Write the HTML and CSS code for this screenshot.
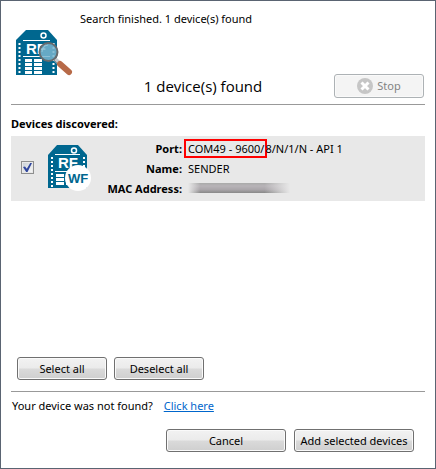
FILE: index.html
```html
<!DOCTYPE html>
<html lang="en">
<head>
<meta charset="utf-8">
<title>Search devices</title>
<link rel="stylesheet" href="styles.css">
</head>
<body>
<main class="dialog">
  <header class="header">
    <svg class="search-icon" viewBox="0 0 58 48" aria-hidden="true">
      <path fill="#00678f" d="M10 0H32L41 10V45H0V10Z"/>
      <circle cx="27.500" cy="5.500" r="2.500" fill="none" stroke="#fff" stroke-width="1.500"/>
      <path stroke="#fff" d="M7 10.500H34M7 26.500H34"/>
      <path stroke="#fff" stroke-width="2" stroke-dasharray="2 2" d="M3.500 13V44M37.500 13V44"/>
      <path stroke="#fff" stroke-width="3" d="M9 30.500H16M18 30.500H26M9 34.500H16M18 34.500H26M9 38.500H16M18 38.500H26M9 42.500H16M18 42.500H26"/>
      <text class="icon-text" x="10" y="24" font-size="15">RF</text>
      <path stroke="#c5c9cc" stroke-width="4" d="M38 28L44 34"/>
      <path stroke="#8a9196" stroke-width="1" d="M38 30L42 34"/>
      <circle cx="32.500" cy="22" r="9" fill="#78b5cf" fill-opacity=".85" stroke="#666a6d" stroke-width="2"/>
      <path fill="none" stroke="#a7d0df" stroke-opacity=".7" d="M26 22A7 7 0 0 1 32 15"/>
      <path stroke="#b76a48" stroke-width="6" stroke-linecap="round" d="M44 34L53 42"/>
    </svg>
    <p class="status">Search finished. 1 device(s) found</p>
    <h1 class="count">1 device(s) found</h1>
    <button class="button stop" type="button" disabled>
      <svg class="stop-icon" viewBox="0 0 16 16" aria-hidden="true">
        <circle cx="8" cy="8" r="8" fill="#c6c6c6"/>
        <path stroke="#fff" stroke-width="3" d="M4.500 4.500L11.500 11.500M11.500 4.500L4.500 11.500"/>
      </svg>
      Stop
    </button>
  </header>

  <section class="devices">
    <h2 class="title">Devices discovered:</h2>
    <div class="device">
      <input class="check" type="checkbox" aria-label="Select SENDER" checked>
      <svg class="device-icon" viewBox="0 0 44 48" aria-hidden="true">
        <path fill="#00678f" d="M9 0H30L39 10V43H0V10Z"/>
        <circle cx="26" cy="5.500" r="2.500" fill="none" stroke="#fff" stroke-width="1.500"/>
        <path stroke="#fff" d="M7 9.500H32M7 26.500H32"/>
        <path stroke="#fff" stroke-width="2" stroke-dasharray="2 2" d="M4 12V42M36 12V30"/>
        <path stroke="#fff" stroke-width="3" d="M8 30.500H16M18 30.500H26M8 34.500H16M18 34.500H26M8 38.500H16M18 38.500H26"/>
        <text class="icon-text" x="10" y="23" font-size="15">RF</text>
        <circle cx="30" cy="33" r="13" fill="#fff"/>
        <text class="icon-text wf" x="30" y="38" font-size="13">WF</text>
      </svg>
      <dl class="details">
        <dt>Port:</dt><dd><span class="marked">COM49 - 9600/</span>8/N/1/N - API 1</dd>
        <dt>Name:</dt><dd>SENDER</dd>
        <dt>MAC Address:</dt><dd><span class="redacted"></span></dd>
      </dl>
    </div>
    <div class="selection">
      <button class="button" type="button">Select all</button>
      <button class="button" type="button">Deselect all</button>
    </div>
  </section>

  <footer class="footer">
    <p class="help">Your device was not found? <a href="#">Click here</a></p>
    <div class="actions">
      <button class="button wide" type="button">Cancel</button>
      <button class="button wide" type="button">Add selected devices</button>
    </div>
  </footer>
</main>
</body>
</html>
```
FILE: styles.css
```css
* {
  box-sizing: border-box;
}

body {
  margin: 0;
  background: #fff;
  color: #000;
  font: 11px/20px "Noto Sans", "Open Sans", sans-serif;
}

p, h1, h2, dl, dd {
  margin: 0;
}

.dialog {
  display: flex;
  flex-direction: column;
  min-height: 100vh;
  padding: 8px 10px 16px;
  border: 1px solid #5a6472;
}

.header {
  display: grid;
  grid-template-columns: 64px 1fr 90px;
  grid-template-rows: 65px 24px;
  padding: 0 1px 6px 5px;
  border-bottom: 1px solid #999;
}

.search-icon {
  grid-row: 1 / 3;
  width: 58px;
  height: 48px;
  margin-top: 21px;
}

.icon-text {
  fill: #fff;
  font-family: "Liberation Sans", sans-serif;
  font-weight: bold;
}

.wf {
  fill: #00678f;
  text-anchor: middle;
}

.status {
  grid-column: 2 / 4;
}

.count {
  grid-row: 2;
  grid-column: 2;
  padding-right: 8px;
  font: 15px/24px "Open Sans", "Noto Sans", sans-serif;
  text-align: center;
}

.button {
  display: flex;
  align-items: center;
  justify-content: center;
  gap: 4px;
  min-width: 90px;
  height: 23px;
  padding: 0;
  border: 1px solid #707070;
  border-radius: 3px;
  background: linear-gradient(#f2f2f2, #ebebeb 48%, #dadada 52%, #cfcfcf);
  box-shadow: inset 0 0 0 1px #fafafa;
  color: #000;
  font: inherit;
}

.stop {
  grid-row: 2;
  grid-column: 3;
  height: 24px;
  border-color: #adb2b5;
  background: #f4f4f4;
  color: #838383;
}

.stop-icon {
  width: 16px;
  height: 16px;
}

.devices {
  display: flex;
  flex: 1;
  flex-direction: column;
  padding: 9px 0 11px;
  border-bottom: 1px solid #999;
}

.title {
  padding-bottom: 2px;
  font-size: 11px;
  font-weight: bold;
}

.device {
  display: flex;
  padding: 3px 0 2px 10px;
  background: #e8e8e8;
}

.check {
  appearance: none;
  width: 13px;
  height: 13px;
  margin: 22px 14px 0 0;
  padding: 1px;
  border: 1px solid #8e8f8f;
  background: #f4f4f4 linear-gradient(135deg, #ccd2d8, #f6f6f6) content-box;
}

.check:checked::before {
  content: "";
  display: block;
  width: 9px;
  height: 9px;
  background: #31479e;
  clip-path: polygon(0 45%, 22% 40%, 42% 65%, 80% 0, 100% 0, 50% 100%, 35% 100%);
}

.device-icon {
  width: 44px;
  height: 48px;
  margin-top: 6px;
}

.details {
  display: grid;
  grid-template-columns: 90px 1fr;
  column-gap: 6px;
  flex: 1;
}

dt {
  font-weight: bold;
  text-align: right;
  white-space: nowrap;
}

.marked {
  margin: 0 -2px 0 -4px;
  padding: 0 1px 0 2px;
  border: 2px solid #f00;
}

.redacted {
  display: block;
  width: 102px;
  height: 10px;
  margin-top: 4px;
  background: linear-gradient(90deg, #e8e8e8, transparent 12% 75%, #e8e8e8),
    linear-gradient(#aaa, #b8b4b8 30%, #aaa6aa 65%, #888);
}

.selection {
  display: flex;
  gap: 7px;
  margin-top: auto;
  padding-left: 6px;
}

.help {
  padding: 4px 0 0 1px;
}

.help a {
  margin-left: 8px;
  color: #0066cc;
}

.actions {
  display: flex;
  justify-content: flex-end;
  gap: 8px;
  padding: 13px 11px 0 0;
}

.wide {
  min-width: 120px;
}
```
